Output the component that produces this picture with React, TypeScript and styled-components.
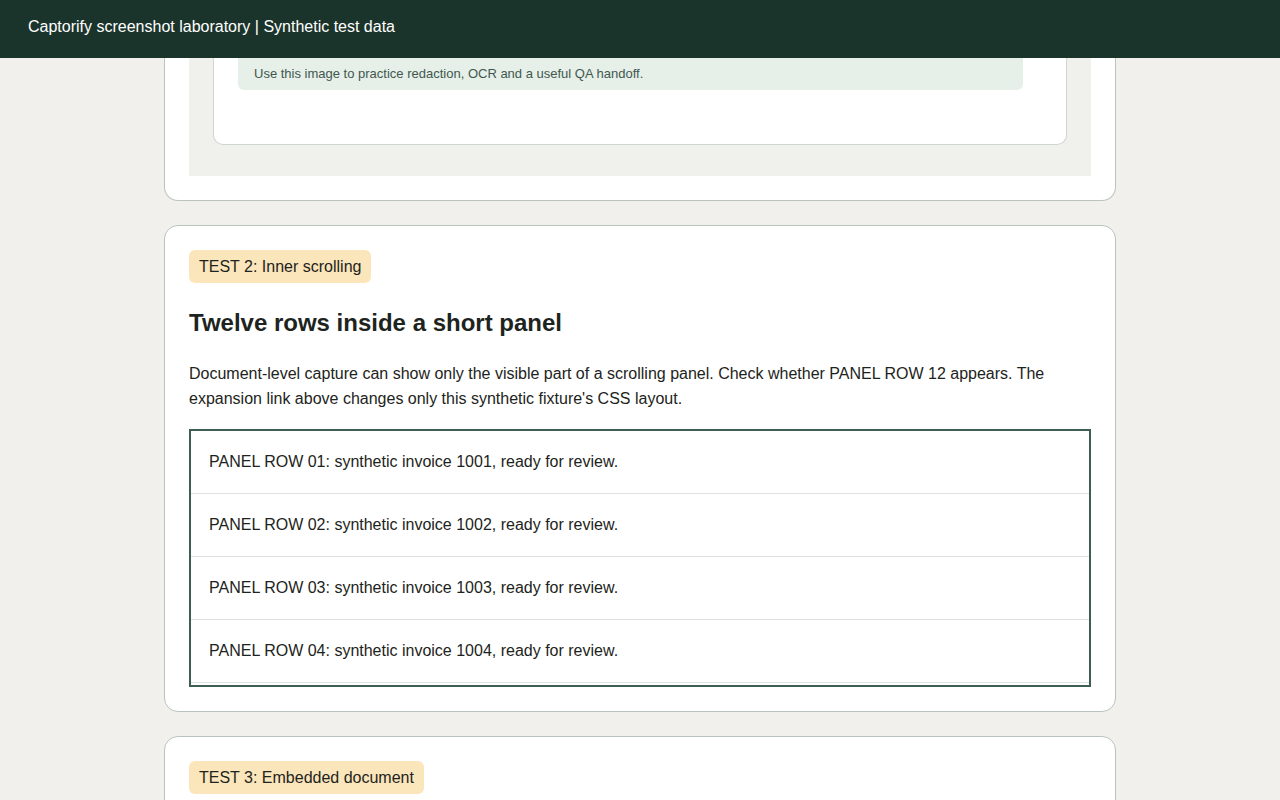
import React from "react";
import styled, { createGlobalStyle } from "styled-components";

const Global = createGlobalStyle`
  html, body { margin: 0; padding: 0; height: 100%; overflow: hidden; }
  body { background: #f1f0ec; font-family: "Liberation Sans", Arial, sans-serif; color: #1d2420; }
`;

const Header = styled.header`
  height: 58px; background: #1b342b; color: #fff; display: flex; align-items: center;
  padding: 0 28px 4px; font-size: 16px; box-sizing: border-box;
`;

const Main = styled.main`
  width: 952px; margin: 0 auto; display: flex; flex-direction: column; gap: 24px;
`;

const Card = styled.section<{ $cut?: boolean }>`
  background: #fff; border: 1px solid #b9c4bc; border-radius: 14px; padding: 24px;
  display: flex; flex-direction: column; align-items: flex-start;
  ${(p) => p.$cut && `border-top: none; border-radius: 0 0 14px 14px; padding-top: 0;`}
`;

const Gray = styled.div`
  align-self: stretch; background: #f0f1ed; padding: 0 24px 31px;
`;

const WhiteBox = styled.div`
  background: #fff; border: 1px solid #cfd6d0; border-top: none; border-radius: 0 0 10px 10px;
  padding: 0 24px 54px;
`;

const Note = styled.div`
  width: 785px; height: 32px; box-sizing: border-box; background: #e6efe8; border-radius: 0 0 6px 6px;
  display: flex; align-items: center; padding: 0 16px 2px; font-size: 13px; color: #41584f;
`;

const Badge = styled.span`
  display: inline-flex; align-items: center; height: 33px; padding: 0 10px; background: #fbe5bb;
  border-radius: 6px; font-size: 16px; color: #1d2420;
`;

const Title = styled.h2`
  margin: 25px 0 0; font-size: 24px; line-height: 30px; font-weight: 700;
`;

const Para = styled.p`
  margin: 23px 0 0; font-size: 16px; line-height: 25px; color: #1d2420;
`;

const Panel = styled.div`
  margin-top: 18px; align-self: stretch; height: 258px; box-sizing: border-box;
  border: 2px solid #3d5e53; overflow: hidden;
`;

const Row = styled.div`
  height: 62px; border-bottom: 1px solid #dfe2df; display: flex; align-items: center;
  padding: 0 18px; font-size: 16px;
`;

const Spacer = styled.div`
  height: 120px;
`;

export default function App() {
  const rows = Array.from({ length: 12 }, (_, i) => i + 1);
  return (
    <>
      <Global />
      <Header>Captorify screenshot laboratory | Synthetic test data</Header>
      <Main>
        <Card $cut>
          <Gray>
            <WhiteBox>
              <Note>Use this image to practice redaction, OCR and a useful QA handoff.</Note>
            </WhiteBox>
          </Gray>
        </Card>
        <Card>
          <Badge>TEST 2: Inner scrolling</Badge>
          <Title>Twelve rows inside a short panel</Title>
          <Para>
            Document-level capture can show only the visible part of a scrolling panel. Check whether PANEL ROW 12
            appears. The expansion link above changes only this synthetic fixture's CSS layout.
          </Para>
          <Panel>
            {rows.map((n) => (
              <Row key={n}>
                PANEL ROW {String(n).padStart(2, "0")}: synthetic invoice {1000 + n}, ready for review.
              </Row>
            ))}
          </Panel>
        </Card>
        <Card>
          <Badge>TEST 3: Embedded document</Badge>
          <Spacer />
        </Card>
      </Main>
    </>
  );
}
